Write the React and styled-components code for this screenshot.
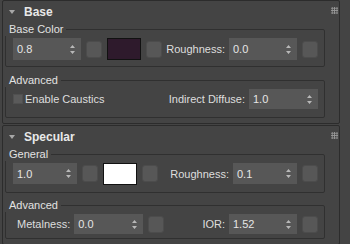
import React from "react";
import styled, { createGlobalStyle } from "styled-components";

const GlobalStyle = createGlobalStyle`
  html, body {
    margin: 0;
    padding: 0;
    background: #444444;
  }
  body {
    font-family: "Liberation Sans", Arial, sans-serif;
    font-size: 11px;
    color: #dcdcdc;
  }
`;

const Panel = styled.div`
  width: 350px;
  height: 244px;
  box-sizing: border-box;
  padding: 0 10px 0 2px;
  display: flex;
  flex-direction: column;
  gap: 1px;
  overflow: hidden;
`;

const Rollout = styled.section`
  border: 1px solid #2c2c2c;
  border-radius: 2px;
  padding: 0 14px 5px 2px;
  display: flex;
  flex-direction: column;
  gap: ${p => p.gap || 4}px;
`;

const Header = styled.div`
  height: 21px;
  margin-right: -14px;
  margin-bottom: ${p => -(p.gap || 4)}px;
  padding: 0 1px 0 4px;
  display: flex;
  align-items: center;
  font-size: 12px;
  font-weight: bold;
  color: #e8e8e8;
`;

const Arrow = styled.span`
  width: 0;
  height: 0;
  border-left: 3px solid transparent;
  border-right: 3px solid transparent;
  border-top: 4px solid #a8a8a8;
  margin-right: 9px;
`;

const Grip = styled.span`
  margin-left: auto;
  align-self: flex-start;
  margin-top: 6px;
  width: 7px;
  height: 7px;
  background-image: radial-gradient(circle, #9a9a9a 0.8px, transparent 1px);
  background-size: 2.4px 2.4px;
`;

const Group = styled.fieldset`
  margin: 0;
  min-width: 0;
  border: 1px solid #303030;
  border-radius: 2px;
  padding: 2px 6px ${p => p.bottom || 6}px 7px;
`;

const Legend = styled.legend`
  margin-left: -8px;
  padding: 0 3px 0 4px;
  line-height: 14px;
  color: #e2e2e2;
`;

const Row = styled.div`
  display: flex;
  align-items: center;
  justify-content: space-between;
  height: ${p => p.h || 22}px;
`;

const Cluster = styled.div`
  display: flex;
  align-items: center;
  gap: ${p => p.gap || 5}px;
`;

const Text = styled.span`
  color: #dedede;
  white-space: nowrap;
  margin-left: ${p => p.ml || 0}px;
`;

const SpinBox = styled.div`
  width: ${p => p.w}px;
  height: ${p => p.h || 22}px;
  box-sizing: border-box;
  background: #575757;
  display: flex;
  align-items: center;
  justify-content: space-between;
  padding: 0 6px 0 4px;
  color: #e6e6e6;
  font-size: 11px;
`;

const Square = styled.div`
  width: 16px;
  height: 17px;
  box-sizing: border-box;
  background: #575757;
  border: 1px solid #4c4c4c;
  border-radius: 3px;
  margin-left: ${p => p.ml || 0}px;
`;

const Swatch = styled.div`
  width: 34px;
  height: 22px;
  box-sizing: border-box;
  background: ${p => p.color};
  border: 1px solid #111111;
`;

const Check = styled.div`
  width: 10px;
  height: 10px;
  background: #5a5a5a;
  border: 1px solid #505050;
  box-sizing: border-box;
`;

function Spinner({ value, w, h }) {
  return (
    <SpinBox w={w} h={h}>
      <span>{value}</span>
      <svg width="5" height="9" viewBox="0 0 5 9">
        <path d="M2.5 0 L5 3 L0 3 Z M0 6 L5 6 L2.5 9 Z" fill="#b8b8b8" />
      </svg>
    </SpinBox>
  );
}

export default function App() {
  return (
    <>
      <GlobalStyle />
      <Panel>
        <Rollout gap={6}>
          <Header gap={6}>
            <Arrow />
            Base
            <Grip />
          </Header>
          <Group>
            <Legend>Base Color</Legend>
            <Row>
              <Cluster>
                <Spinner value="0.8" w={68} />
                <Square />
                <Swatch color="#2e1a2c" />
                <Square />
              </Cluster>
              <Cluster gap={4}>
                <Text>Roughness:</Text>
                <Spinner value="0.0" w={68} />
                <Square ml={1} />
              </Cluster>
            </Row>
          </Group>
          <Group bottom={8}>
            <Legend>Advanced</Legend>
            <Row h={20}>
              <Cluster gap={2}>
                <Check />
                <Text>Enable Caustics</Text>
              </Cluster>
              <Cluster gap={4}>
                <Text>Indirect Diffuse:</Text>
                <Spinner value="1.0" w={69} h={20} />
              </Cluster>
            </Row>
          </Group>
        </Rollout>

        <Rollout gap={5}>
          <Header gap={5}>
            <Arrow />
            Specular
            <Grip />
          </Header>
          <Group bottom={8}>
            <Legend>General</Legend>
            <Row h={21}>
              <Cluster>
                <Spinner value="1.0" w={64} h={21} />
                <Square />
                <Swatch color="#ffffff" />
                <Square />
              </Cluster>
              <Cluster gap={4}>
                <Text>Roughness:</Text>
                <Spinner value="0.1" w={64} h={21} />
                <Square ml={1} />
              </Cluster>
            </Row>
          </Group>
          <Group bottom={4}>
            <Legend>Advanced</Legend>
            <Row h={20}>
              <Cluster gap={4}>
                <Text ml={4}>Metalness:</Text>
                <Spinner value="0.0" w={69} h={20} />
                <Square ml={1} />
              </Cluster>
              <Cluster gap={4}>
                <Text>IOR:</Text>
                <Spinner value="1.52" w={68} h={20} />
                <Square ml={1} />
              </Cluster>
            </Row>
          </Group>
        </Rollout>
      </Panel>
    </>
  );
}
